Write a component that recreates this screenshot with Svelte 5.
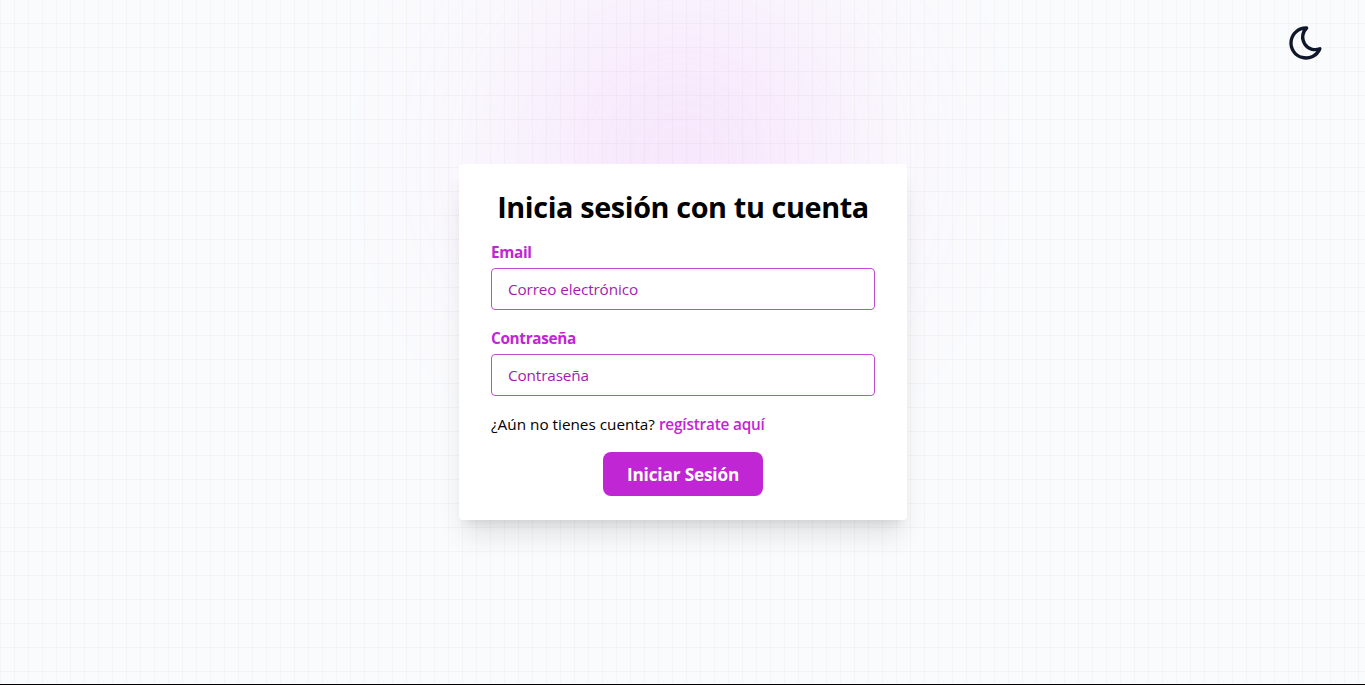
<script>
  let email = $state('');
  let password = $state('');
</script>

<div class="page">
  <div class="backdrop"><div class="glow"></div></div>

  <header>
    <button class="theme" type="button" aria-label="Tema">
      <svg width="40" height="40" viewBox="0 0 24 24" fill="none" stroke="currentColor" stroke-width="2" stroke-linecap="round" stroke-linejoin="round">
        <path d="M12 3c.132 0 .263 0 .393 0a7.5 7.5 0 0 0 7.92 12.446a9 9 0 1 1 -8.313 -12.454z" />
      </svg>
    </button>
  </header>

  <main>
    <form onsubmit={(e) => e.preventDefault()}>
      <h1>Inicia sesión con tu cuenta</h1>
      <div class="field">
        <label for="email">Email</label>
        <input id="email" type="email" placeholder="Correo electrónico" bind:value={email} />
      </div>
      <div class="field">
        <label for="password">Contraseña</label>
        <input id="password" type="password" placeholder="Contraseña" bind:value={password} />
      </div>
      <p>¿Aún no tienes cuenta? <a href="#registro">regístrate aquí</a></p>
      <button class="submit" type="submit">Iniciar Sesión</button>
    </form>
  </main>
</div>

<style>
  :global(body) {
    margin: 0;
    background: #000;
    overflow: hidden;
  }
  .page, .page * { box-sizing: border-box; }
  .page {
    position: relative;
    height: 684px;
    overflow: hidden;
    background: #fafbfd;
    color: #000;
    font: 15.3px/24px "Open Sans", "Noto Sans", sans-serif;
    isolation: isolate;
  }
  .backdrop {
    position: absolute;
    inset: 0;
    z-index: -1;
    background-image:
      linear-gradient(to right, #8080800c 1px, transparent 1px),
      linear-gradient(to bottom, #8080800e 1px, transparent 1px);
    background-size: 14px 24px;
    background-position: 0 -1px;
  }
  .glow {
    width: 310px;
    height: 310px;
    margin: -1px auto 0;
    border-radius: 50%;
    background: #e879f9;
    opacity: 0.2;
    filter: blur(100px);
  }
  header {
    display: flex;
    justify-content: flex-end;
    height: 63px;
    padding: 23px 39px 0 0;
  }
  .theme {
    width: 40px;
    height: 40px;
    padding: 0;
    border: 0;
    background: none;
    color: #0f172a;
  }
  .theme svg { display: block; }
  main {
    display: flex;
    justify-content: center;
    padding: 101px 0 0 1px;
  }
  form {
    display: flex;
    flex-direction: column;
    gap: 16px;
    width: 448px;
    height: 356px;
    padding: 24px 32px;
    border-radius: 4px;
    background: #fff;
    box-shadow: 0 20px 25px -5px #0000001a, 0 8px 10px -6px #0000001a;
  }
  h1 {
    height: 36px;
    margin: 0;
    font-size: 28.8px;
    line-height: 37px;
    font-weight: 700;
    text-align: center;
    white-space: nowrap;
    letter-spacing: -0.38px;
  }
  .field { display: flex; flex-direction: column; gap: 4px; }
  label { font-weight: 700; color: #c026d3; letter-spacing: -0.3px; }
  input {
    height: 42px;
    padding: 8px 16px;
    border: 1px solid #c04cce;
    border-radius: 4px;
    background: #fff;
    font: inherit;
    letter-spacing: -0.12px;
    outline: none;
  }
  input::placeholder { color: #a21caf; opacity: 1; }
  p { margin: 0; white-space: nowrap; }
  a {
    color: #c026d3;
    font-weight: 600;
    letter-spacing: -0.17px;
    text-decoration: none;
  }
  .submit {
    align-self: center;
    width: 160px;
    height: 44px;
    padding: 2px 0 0;
    border: 0;
    border-radius: 8px;
    background: #c026d3;
    color: #fff;
    font: 700 17.2px/28px "Open Sans", "Noto Sans", sans-serif;
    letter-spacing: -0.15px;
    white-space: nowrap;
  }
</style>
